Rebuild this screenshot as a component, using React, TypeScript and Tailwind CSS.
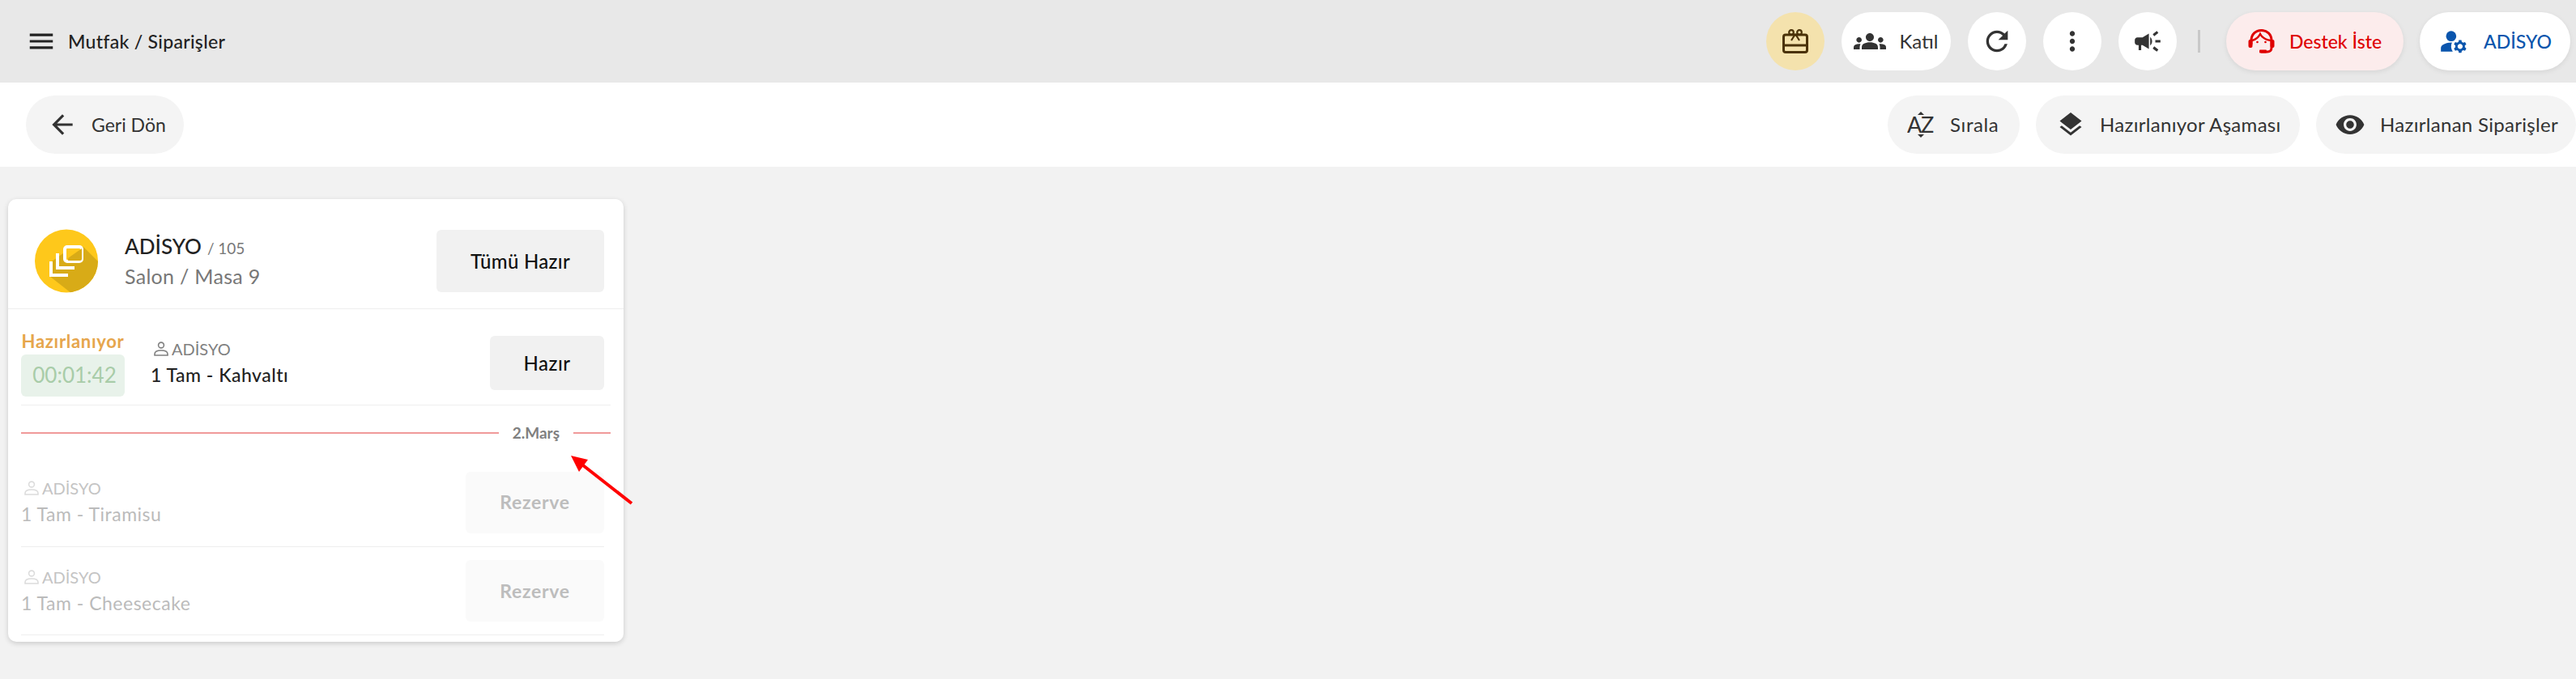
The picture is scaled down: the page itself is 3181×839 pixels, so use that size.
import React from 'react';
import { MdMenu, MdArrowBack, MdGroups, MdRefresh, MdMoreVert, MdCampaign, MdManageAccounts, MdLayers, MdVisibility } from 'react-icons/md';

const GiftIcon = () => (
  <svg width="32" height="30" viewBox="0 0 32 30" fill="none" stroke="#4a3208" strokeWidth="3">
    <rect x="1.5" y="7" width="29" height="21.5" rx="2.5" />
    <path d="M1.5 20h29" strokeWidth="3" />
    <circle cx="11" cy="4" r="2.8" strokeWidth="2.2" />
    <circle cx="21" cy="4" r="2.8" strokeWidth="2.2" />
    <path d="M16 6l-5 8M16 6l5 8" strokeWidth="2.2" />
  </svg>
);

const AgentIcon = () => (
  <svg width="33" height="30" viewBox="0 0 33 30" fill="none" stroke="#df0000" strokeWidth="3">
    <path d="M4 19V14C4 6.5 9.5 1.5 16.5 1.5S29 6.5 29 14v9c0 3-2 5-5 5h-8" />
    <path d="M5 14C9 13 13 10 15 6c2 4 7 7 13 8" strokeWidth="2.4" />
    <rect x="0.5" y="13" width="5" height="10" rx="2" fill="#df0000" stroke="none" />
    <rect x="27.5" y="13" width="5" height="10" rx="2" fill="#df0000" stroke="none" />
    <rect x="14" y="25.5" width="9" height="4" rx="1" fill="#df0000" stroke="none" />
    <circle cx="11.5" cy="16" r="1.3" fill="#df0000" stroke="none" />
    <circle cx="21.5" cy="16" r="1.3" fill="#df0000" stroke="none" />
  </svg>
);

const SortIcon = () => (
  <svg width="34" height="32" viewBox="0 0 34 32" fill="#333333">
    <text x="0" y="26" fontFamily="Lato, sans-serif" fontSize="27">A</text>
    <text x="17" y="26" fontFamily="Lato, sans-serif" fontSize="27">Z</text>
    <path d="M17 0l4 4h-8zM17 32l4-4h-8z" />
  </svg>
);

const PersonIcon = ({ color }: { color: string }) => (
  <svg width="18" height="18" viewBox="0 0 18 18" fill="none" stroke={color} strokeWidth="1.6">
    <circle cx="9" cy="4.5" r="3.4" />
    <path d="M1 17v-1.5C1 12.5 4.5 11 9 11s8 1.5 8 4.5V17z" />
  </svg>
);

const OrderAvatar = () => (
  <svg width="78" height="79" viewBox="0 0 78 79" className="shrink-0">
    <defs>
      <clipPath id="avatar-circle">
        <circle cx="39" cy="39.5" r="39" />
      </clipPath>
    </defs>
    <circle cx="39" cy="39.5" r="39" fill="#fec81b" />
    <path d="M18 58L46 80H82V44L60 22L35 30L18 42z" fill="#d8ab17" clipPath="url(#avatar-circle)" />
    <rect x="37" y="22" width="21" height="18" rx="3" fill="#fec81b" stroke="#ffffff" strokeWidth="4" />
    <path d="M41 36L58 24v13a2 2 0 0 1-2 2H41z" fill="#d8ab17" />
    <path d="M28 30v18h21" fill="none" stroke="#ffffff" strokeWidth="4" />
    <path d="M20 40v17h21" fill="none" stroke="#ffffff" strokeWidth="4" />
  </svg>
);

const HeaderCircle = ({ children, className = 'bg-white' }: { children: React.ReactNode; className?: string }) => (
  <button className={`flex h-[72px] w-[72px] items-center justify-center rounded-full ${className}`}>{children}</button>
);

const ToolbarButton = ({ icon, label, className }: { icon: React.ReactNode; label: string; className: string }) => (
  <button className={`flex h-[72px] items-center rounded-full bg-[#f4f4f4] text-[#333333] ${className}`}>
    {icon}
    <span>{label}</span>
  </button>
);

const WaitingRow = ({ name, className }: { name: string; className: string }) => (
  <div className={`mr-2 flex items-center justify-between border-b border-[#eeeeee] ${className}`}>
    <div className="mt-[-2px]">
      <div className="flex items-center gap-[4px] pl-[4px] text-[20px] leading-[26px] text-[#c4c4c4]">
        <PersonIcon color="#dcdcdc" />
        <span>ADİSYO</span>
      </div>
      <div className="mt-[5px] text-[23px] leading-[28px] tracking-[0.5px] text-[#bbbbbb]">{name}</div>
    </div>
    <button className="flex h-[76px] w-[171px] items-center justify-center rounded-md bg-[#fafafa] text-[23px] font-bold tracking-[0.7px] text-[#bdbdbd]">Rezerve</button>
  </div>
);

const App: React.FC = () => {
  return (
    <div className="h-[839px] overflow-hidden bg-[#f2f2f2] font-['Lato',sans-serif] text-[#222222]">
      <header className="flex h-[102px] items-center justify-between bg-[#e8e8e8] pl-[32px] pr-[7px]">
        <div className="flex items-center">
          <MdMenu size={38} className="text-[#222222]" />
          <span className="ml-[14px] text-[23px] font-medium tracking-[0.3px]">Mutfak / Siparişler</span>
        </div>
        <div className="flex items-center">
          <HeaderCircle className="bg-[#f4e2ad]"><GiftIcon /></HeaderCircle>
          <button className="ml-[21px] flex h-[72px] w-[135px] items-center justify-center gap-[16px] rounded-full bg-white text-[24px] text-[#333333]">
            <MdGroups size={40} />
            <span>Katıl</span>
          </button>
          <HeaderCircle className="ml-[21px] bg-white"><MdRefresh size={40} className="text-[#333333]" /></HeaderCircle>
          <HeaderCircle className="ml-[21px] bg-white"><MdMoreVert size={38} className="text-[#333333]" /></HeaderCircle>
          <HeaderCircle className="ml-[21px] bg-white"><MdCampaign size={38} className="text-[#333333]" /></HeaderCircle>
          <div className="ml-[26px] h-[28px] w-[3px] bg-[#c8c8c8]" />
          <button className="ml-[32px] flex h-[72px] w-[219px] items-center justify-center gap-[18px] rounded-full bg-[#fcecec] text-[23px] font-medium text-[#df0000] shadow-[0_2px_6px_rgba(0,0,0,0.08)]">
            <AgentIcon />
            <span>Destek İste</span>
          </button>
          <button className="ml-[20px] flex h-[72px] w-[186px] items-center justify-center gap-[18px] rounded-full bg-white text-[23px] font-medium text-[#0a55ad] shadow-[0_2px_6px_rgba(0,0,0,0.08)]">
            <MdManageAccounts size={38} />
            <span>ADİSYO</span>
          </button>
        </div>
      </header>

      <div className="flex h-[104px] items-center justify-between bg-white pl-[32px]">
        <ToolbarButton
          icon={<MdArrowBack size={38} className="mr-[17px]" />}
          label="Geri Dön"
          className="w-[195px] pl-[26px] text-[23px]"
        />
        <div className="flex items-center gap-[20px]">
          <ToolbarButton icon={<span className="mr-[19px]"><SortIcon /></span>} label="Sırala" className="w-[163px] pl-[24px] text-[24px] tracking-[0.6px]" />
          <ToolbarButton icon={<MdLayers size={36} className="mr-[18px]" />} label="Hazırlanıyor Aşaması" className="w-[326px] pl-[25px] text-[24px] tracking-[0.3px]" />
          <ToolbarButton icon={<MdVisibility size={38} className="mr-[18px]" />} label="Hazırlanan Siparişler" className="w-[321px] pl-[23px] text-[24px] tracking-[0.3px]" />
        </div>
      </div>

      <div className="relative ml-[10px] mt-[40px] w-[760px] rounded-[10px] bg-white shadow-[0_2px_6px_rgba(0,0,0,0.16)]">
        <div className="flex h-[136px] items-center justify-between border-b border-[#eeeeee] pl-[33px] pr-[24px] pt-[18px]">
          <div className="flex items-center gap-[33px]">
            <OrderAvatar />
            <div>
              <div className="flex items-baseline gap-[7px]">
                <span className="text-[26px] font-medium leading-[36px]">ADİSYO</span>
                <span className="text-[19px] text-[#777777]">/ 105</span>
              </div>
              <div className="text-[25px] leading-[38px] tracking-[0.3px] text-[#777777]">Salon / Masa 9</div>
            </div>
          </div>
          <button className="flex h-[77px] w-[207px] items-center justify-center rounded-md bg-[#f1f1f1] text-[24px] font-medium tracking-[0.3px] text-[#111111]">Tümü Hazır</button>
        </div>

        <div className="px-[16px] pb-[8px]">
          <div className="flex h-[119px] items-center border-b border-[#eeeeee] pr-[8px] pt-[15px]">
            <div className="w-[128px] shrink-0">
              <div className="whitespace-nowrap text-center text-[22px] font-bold leading-[28px] tracking-[0.7px] text-[#e6a64c]">Hazırlanıyor</div>
              <div className="mt-[2px] flex h-[52px] items-center justify-center rounded-md bg-[#e8f2ea] pl-[4px] text-[26px] text-[#a8cca8]">00:01:42</div>
            </div>
            <div className="ml-[32px] mt-[-2px]">
              <div className="flex items-center gap-[4px] pl-[4px] text-[20px] leading-[26px] text-[#808080]">
                <PersonIcon color="#808080" />
                <span>ADİSYO</span>
              </div>
              <div className="mt-[5px] text-[23px] font-medium leading-[28px] tracking-[0.5px]">1 Tam - Kahvaltı</div>
            </div>
            <button className="ml-auto flex h-[67px] w-[141px] items-center justify-center rounded-md bg-[#f1f1f1] text-[24px] font-medium tracking-[0.5px] text-[#111111]">Hazır</button>
          </div>

          <div className="flex h-[65px] items-center pt-[3px]">
            <div className="h-[2px] flex-1 bg-[#f09a9a]" />
            <span className="px-[17px] text-[19px] font-bold text-[#808080]">2.Marş</span>
            <div className="h-[2px] w-[46px] bg-[#f09a9a]" />
          </div>

          <WaitingRow name="1 Tam - Tiramisu" className="h-[110px]" />
          <WaitingRow name="1 Tam - Cheesecake" className="h-[109px]" />
        </div>

        <svg width="90" height="70" viewBox="0 0 90 70" className="absolute left-[690px] top-[312px]">
          <path d="M80 64L20 17" stroke="#ff0000" strokeWidth="4" />
          <path d="M5 5L26 10L15 25z" fill="#ff0000" />
        </svg>
      </div>
    </div>
  );
};

export default App;
